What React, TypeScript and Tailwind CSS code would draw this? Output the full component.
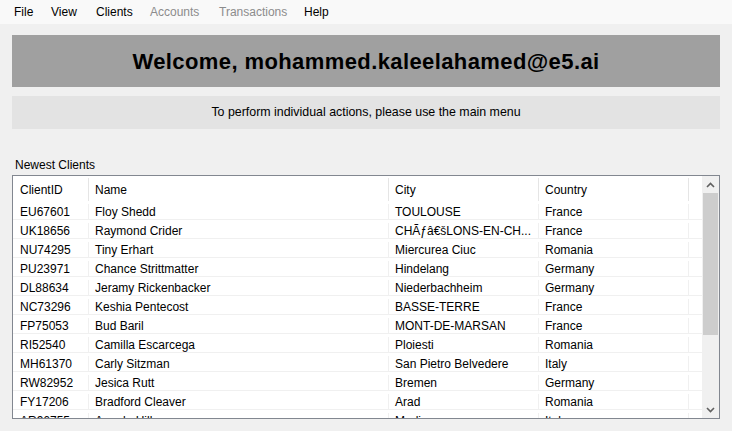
import React from 'react';

type Client = { id: string; name: string; city: string; country: string };

const clients: Client[] = [
  { id: 'EU67601', name: 'Floy Shedd', city: 'TOULOUSE', country: 'France' },
  { id: 'UK18656', name: 'Raymond Crider', city: 'CHÃƒâ€šLONS-EN-CH...', country: 'France' },
  { id: 'NU74295', name: 'Tiny Erhart', city: 'Miercurea Ciuc', country: 'Romania' },
  { id: 'PU23971', name: 'Chance Strittmatter', city: 'Hindelang', country: 'Germany' },
  { id: 'DL88634', name: 'Jeramy Rickenbacker', city: 'Niederbachheim', country: 'Germany' },
  { id: 'NC73296', name: 'Keshia Pentecost', city: 'BASSE-TERRE', country: 'France' },
  { id: 'FP75053', name: 'Bud Baril', city: 'MONT-DE-MARSAN', country: 'France' },
  { id: 'RI52540', name: 'Camilla Escarcega', city: 'Ploiesti', country: 'Romania' },
  { id: 'MH61370', name: 'Carly Sitzman', city: 'San Pietro Belvedere', country: 'Italy' },
  { id: 'RW82952', name: 'Jesica Rutt', city: 'Bremen', country: 'Germany' },
  { id: 'FY17206', name: 'Bradford Cleaver', city: 'Arad', country: 'Romania' },
  { id: 'AR96755', name: 'Angela Hill', city: 'Modica', country: 'Italy' },
];

const menu = [
  { label: 'File', w: 'w-[37px]', disabled: false },
  { label: 'View', w: 'w-[45px]', disabled: false },
  { label: 'Clients', w: 'w-[54px]', disabled: false },
  { label: 'Accounts', w: 'w-[69px]', disabled: true },
  { label: 'Transactions', w: 'w-[85px]', disabled: true },
  { label: 'Help', w: 'w-[40px]', disabled: false },
];

const Row = ({ c, header }: { c: Client; header?: boolean }) => {
  const line = header ? 'border-[#e5e5e5]' : 'border-[#f0f0f0]';
  return (
    <div className={`flex shrink-0 ${header ? 'h-[25px] pt-[2px]' : `h-[19px] pt-[3px] border-b ${line}`}`}>
      <div className={`w-[76px] pl-[7px] border-r ${line} flex items-center`}>{c.id}</div>
      <div className={`w-[300px] pl-[6px] border-r ${line} flex items-center`}>{c.name}</div>
      <div className={`w-[150px] pl-[6px] border-r ${line} flex items-center whitespace-nowrap`}>{c.city}</div>
      <div className={`w-[150px] pl-[6px] border-r ${line} flex items-center`}>{c.country}</div>
      <div className="flex-1" />
    </div>
  );
};

export default function App() {
  return (
    <div className="w-[732px] h-[431px] bg-[#f0f0f0] text-black text-[12px] overflow-hidden font-['Liberation_Sans',Arial,sans-serif]">
      <div className="h-[24px] bg-[#f9f9f9] flex items-center pl-[14px]">
        {menu.map(m => (
          <span key={m.label} className={`${m.w} ${m.disabled ? 'text-[#8c8c8c]' : 'text-black'}`}>
            {m.label}
          </span>
        ))}
      </div>

      <div className="px-[12px]">
        <div className="mt-[11px] h-[52px] bg-[#a0a0a0] flex items-center justify-center text-[22px] tracking-[0.4px] font-bold">
          Welcome, mohammed.kaleelahamed@e5.ai
        </div>
        <div className="mt-[9px] h-[33px] bg-[#e3e3e3] flex items-center justify-center text-[12.4px]">
          To perform individual actions, please use the main menu
        </div>

        <div className="mt-[29px] h-[14px] leading-[14px] pl-[3px]">Newest Clients</div>

        <div className="mt-[3px] h-[244px] border border-[#828790] bg-white flex overflow-hidden">
          <div className="flex-1 flex flex-col overflow-hidden">
            <Row c={{ id: 'ClientID', name: 'Name', city: 'City', country: 'Country' }} header />
            {clients.map(c => (
              <Row key={c.id} c={c} />
            ))}
          </div>
          <div className="w-[17px] bg-[#f0f0f0] flex flex-col">
            <div className="h-[17px] flex items-center justify-center">
              <svg width="9" height="6" viewBox="0 0 9 6">
                <polyline points="1,5 4.5,1.5 8,5" fill="none" stroke="#606060" strokeWidth="1.6" />
              </svg>
            </div>
            <div className="h-[142px] mx-[1px] bg-[#cdcdcd]" />
            <div className="flex-1" />
            <div className="h-[17px] flex items-center justify-center">
              <svg width="9" height="6" viewBox="0 0 9 6">
                <polyline points="1,1 4.5,4.5 8,1" fill="none" stroke="#606060" strokeWidth="1.6" />
              </svg>
            </div>
          </div>
        </div>
      </div>
    </div>
  );
}
